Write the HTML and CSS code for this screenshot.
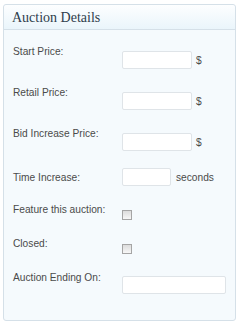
FILE: index.html
```html
<!DOCTYPE html>
<html lang="en">
<head>
  <meta charset="UTF-8">
  <title>Auction Details</title>
  <link rel="stylesheet" href="styles.css">
</head>
<body>

  <!-- auction details box -->
  <div class="panel">
    <div class="panel-head">
      <h3>Auction Details</h3>
    </div>

    <div class="panel-body">
      <div class="row">
        <label>Start Price:</label>
        <div class="field"><input type="text" class="price"> <span class="unit">$</span></div>
      </div>

      <div class="row">
        <label>Retail Price:</label>
        <div class="field"><input type="text" class="price"> <span class="unit">$</span></div>
      </div>

      <div class="row">
        <label>Bid Increase Price:</label>
        <div class="field"><input type="text" class="price"> <span class="unit">$</span></div>
      </div>

      <div class="row row-time">
        <label>Time Increase:</label>
        <div class="field"><input type="text" class="time"> <span class="unit">seconds</span></div>
      </div>

      <div class="row row-check">
        <label>Feature this auction:</label>
        <div class="field"><input type="checkbox"></div>
      </div>

      <div class="row row-check">
        <label>Closed:</label>
        <div class="field"><input type="checkbox"></div>
      </div>

      <div class="row row-end">
        <label>Auction Ending On:</label>
        <div class="field"><input type="text" class="date"></div>
      </div>
    </div>
  </div>

</body>
</html>
```

FILE: styles.css
```css
body {
  margin: 0;
  padding: 4px 4px 4px 3px;
  background-color: #fff;
  font-family: "Liberation Sans", Arial, sans-serif;
}

.panel {
  width: 233px;
  height: 317px;
  box-sizing: border-box;
  border: 1px solid #d5e0e8;
  border-radius: 3px;
  background-color: #f5fafd;
}

.panel-head {
  height: 24px;
  border-bottom: 1px solid #d5e0e8;
  background: linear-gradient(#fdfeff, #eaf5fb);
  border-radius: 3px 3px 0 0;
}

.panel-head h3 {
  margin: 0;
  padding: 5px 0 0 8px;
  font-family: "Liberation Serif", Georgia, serif;
  font-size: 14px;
  font-weight: normal;
  line-height: 16px;
  color: #2e3d4c;
}

.panel-body {
  padding: 15px 0 0 9px;
  display: flex;
  flex-direction: column;
  gap: 17px;
}

.row {
  display: flex;
  align-items: flex-start;
  font-size: 10.2px;
  line-height: 13px;
  color: #4a4a4a;
}

.row label {
  width: 109px;
  flex-shrink: 0;
}

.field {
  display: flex;
  align-items: center;
  gap: 4px;
  margin-top: 6px;
}

input[type="text"] {
  appearance: none;
  box-sizing: border-box;
  height: 18px;
  margin: 0;
  border: 1px solid #dfe4e8;
  border-radius: 2px;
  background-color: #fff;
}

.price { width: 70px; }
.time { width: 49px; }
.date { width: 104px; }

.row-time label { padding-top: 3px; }
.row-time .field { margin-top: 0; gap: 5px; }

.row-check .field { margin-top: 7px; }

input[type="checkbox"] {
  appearance: none;
  width: 10px;
  height: 10px;
  margin: 0;
  border: 1px solid #a5a5a5;
  background: linear-gradient(#dcdcdc, #f7f7f7);
}

.row-end .field { margin-top: 5px; }
```
